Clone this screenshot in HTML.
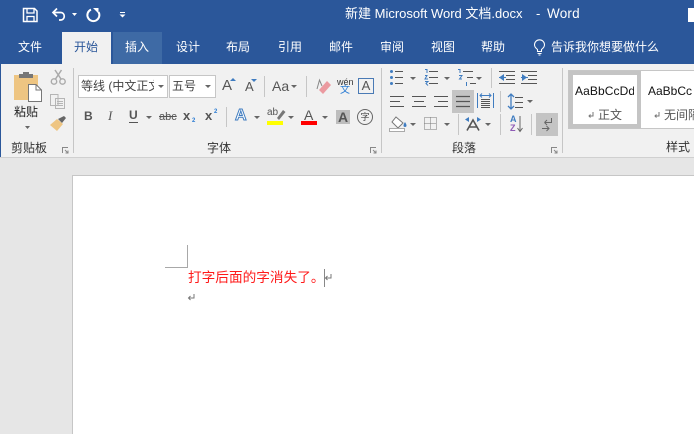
<!DOCTYPE html>
<html lang="zh">
<head>
<meta charset="utf-8">
<style>
html,body{margin:0;padding:0;width:694px;height:434px;overflow:hidden;background:#e6e6e6;}
body{position:relative;font-family:"Liberation Sans","Noto Sans CJK SC",sans-serif;}
div,span{position:absolute;white-space:nowrap;}
.t{font-size:12px;line-height:16px;color:#fff;text-align:center;width:48px;top:39px;}
.l{font-size:12px;line-height:16px;color:#333;}
svg{position:absolute;left:0;top:0;}
</style>
</head>
<body>
<div style="left:0;top:0;width:694px;height:64px;background:#2b579a"></div>
<div style="left:0;top:64px;width:694px;height:93px;background:#f1f1f1"></div>
<div style="left:0;top:64px;width:1px;height:93px;background:#2b579a"></div>
<div style="left:0;top:157px;width:694px;height:1px;background:#d0d0d0"></div>
<div style="left:62px;top:32px;width:49px;height:32px;background:#f1f1f1"></div>
<div style="left:113px;top:32px;width:49px;height:32px;background:#3e6aa5"></div>
<div style="left:688px;top:8px;width:6px;height:14px;background:#fff"></div>

<div style="left:345px;top:6px;font-size:13px;line-height:16px;color:#fff">新建 Microsoft Word 文档.docx</div>
<div style="left:536px;top:6px;font-size:13px;line-height:16px;color:#fff">-</div>
<div style="left:547px;top:6px;font-size:13.5px;line-height:16px;color:#fff;letter-spacing:.2px">Word</div>

<div class="t" style="left:6px">文件</div>
<div class="t" style="left:62px;color:#2b579a">开始</div>
<div class="t" style="left:113px">插入</div>
<div class="t" style="left:164px">设计</div>
<div class="t" style="left:214px">布局</div>
<div class="t" style="left:266px">引用</div>
<div class="t" style="left:317px">邮件</div>
<div class="t" style="left:368px">审阅</div>
<div class="t" style="left:419px">视图</div>
<div class="t" style="left:469px">帮助</div>
<div class="t" style="left:551px;width:auto">告诉我你想要做什么</div>

<!-- ribbon separators -->
<div style="left:73px;top:68px;width:1px;height:85px;background:#c6c6c6"></div>
<div style="left:381px;top:68px;width:1px;height:85px;background:#c6c6c6"></div>
<div style="left:562px;top:68px;width:1px;height:85px;background:#c6c6c6"></div>

<!-- group labels -->
<div class="l" style="left:14px;top:104px;color:#222">粘贴</div>
<div class="l" style="left:11px;top:140px">剪贴板</div>
<div class="l" style="left:207px;top:140px">字体</div>
<div class="l" style="left:452px;top:140px">段落</div>
<div class="l" style="left:666px;top:139px">样式</div>

<!-- font boxes -->
<div style="left:78px;top:75px;width:90px;height:23px;background:#fff;border:1px solid #c6c6c6;box-sizing:border-box"></div>
<div style="left:169px;top:75px;width:47px;height:23px;background:#fff;border:1px solid #c6c6c6;box-sizing:border-box"></div>
<div style="left:81px;top:78px;width:73px;height:16px;overflow:hidden;font-size:12px;line-height:16px;color:#444">等线 (中文正文)</div>
<div style="left:172px;top:78px;font-size:12px;line-height:16px;color:#444">五号</div>

<div style="left:84px;top:108px;font:bold 12px/16px 'Liberation Sans',sans-serif;color:#555">B</div>
<div style="left:108px;top:108px;font:italic 13px/16px 'Liberation Serif',serif;color:#555">I</div>
<div style="left:129px;top:107px;font:bold 12px/16px 'Liberation Sans',sans-serif;color:#555">U</div>
<div style="left:159px;top:109px;font:11px/16px 'Liberation Sans',sans-serif;color:#555;text-decoration:line-through">abc</div>
<div style="left:183px;top:108px;font:bold 13px/16px 'Liberation Sans',sans-serif;color:#555">x</div>
<div style="left:192px;top:117px;font:bold 6px/8px 'Liberation Sans',sans-serif;color:#2b7cd3">2</div>
<div style="left:205px;top:108px;font:bold 13px/16px 'Liberation Sans',sans-serif;color:#555">x</div>
<div style="left:214px;top:108px;font:bold 6px/8px 'Liberation Sans',sans-serif;color:#2b7cd3">2</div>

<div style="left:222px;top:77px;font:15px/18px 'Liberation Sans',sans-serif;color:#555">A</div>
<div style="left:245px;top:79px;font:13px/16px 'Liberation Sans',sans-serif;color:#555">A</div>
<div style="left:272px;top:77px;font:14px/18px 'Liberation Sans',sans-serif;color:#555">Aa</div>
<div style="left:337px;top:77px;font:9px/10px 'Liberation Sans',sans-serif;color:#333">wén</div>
<div style="left:340px;top:85px;font:10px/12px 'Liberation Sans','Noto Sans CJK SC',sans-serif;color:#2b7cd3">文</div>
<div style="left:358px;top:78px;width:16px;height:16px;box-sizing:border-box;border:1px solid #4a7ab5;font:13px/14px 'Liberation Sans',sans-serif;color:#555;text-align:center">A</div>
<div style="left:235px;top:107px;font:bold 16px/18px 'Liberation Sans',sans-serif;color:#fff;-webkit-text-stroke:1px #3f7cc0">A</div>
<div style="left:267px;top:107px;font:10px/12px 'Liberation Sans',sans-serif;color:#555">ab</div>
<div style="left:304px;top:107px;font:14px/16px 'Liberation Sans',sans-serif;color:#555">A</div>
<div style="left:336px;top:110px;width:14px;height:14px;background:#bdbdbd;font:bold 14px/14px 'Liberation Sans',sans-serif;color:#555;text-align:center">A</div>
<div style="left:357px;top:109px;width:16px;height:16px;box-sizing:border-box;border:1px solid #666;border-radius:50%;font-size:9px;line-height:14px;color:#444;text-align:center">字</div>
<span style="left:510px;top:114px;font:bold 9px/10px 'Liberation Sans',sans-serif;color:#3f7cc0">A</span>
<span style="left:510px;top:123px;font:bold 9px/10px 'Liberation Sans',sans-serif;color:#8e5bb5">Z</span>

<!-- paragraph highlights -->
<div style="left:452px;top:90px;width:22px;height:23px;background:#c4c4c4"></div>
<div style="left:536px;top:113px;width:22px;height:23px;background:#c4c4c4"></div>

<!-- styles gallery -->
<div style="left:568px;top:70px;width:126px;height:59px;background:#fff;border:1px solid #c6c6c6;border-right:0;box-sizing:border-box"></div>
<div style="left:569px;top:71px;width:72px;height:57px;background:#c4c4c4"></div>
<div style="left:573px;top:75px;width:64px;height:49px;background:#fff"></div>
<div style="left:575px;top:83px;width:59px;height:16px;overflow:hidden;font-size:12px;line-height:16px;color:#111;letter-spacing:.1px">AaBbCcDd</div>
<div style="left:648px;top:83px;font-size:12px;line-height:16px;color:#111">AaBbCc</div>
<div style="left:598px;top:107px;font-size:12px;line-height:16px;color:#555">正文</div>
<div style="left:664px;top:107px;font-size:12px;line-height:16px;color:#555">无间隔</div>

<!-- page -->
<div style="left:72px;top:175px;width:640px;height:280px;background:#fff;border:1px solid #c6c6c6;box-sizing:border-box"></div>
<div style="left:187px;top:245px;width:1px;height:23px;background:#a8a8a8"></div>
<div style="left:165px;top:267px;width:23px;height:1px;background:#a8a8a8"></div>
<div style="left:188px;top:269px;font-size:13.67px;line-height:18px;color:#ff1a1a">打字后面的字消失了。</div>
<div style="left:324px;top:269px;width:1px;height:18px;background:#888"></div>

<svg width="694" height="434" viewBox="0 0 694 434" fill="none">
<!-- save -->
<path d="M23.500 8.500H34.500L37 11V21.500H23.500Z" stroke="#fff" stroke-width="1.500"/>
<path d="M27 9V13H34V9M27 21V16.500H34V21" stroke="#fff" stroke-width="1.300"/>
<!-- undo -->
<path d="M57 8.500L53 12.500L57 16.500M53.500 12.500H60.500C65.500 12.500 65.500 20 60.500 20H59" stroke="#fff" stroke-width="1.700"/>
<path d="M72 13H77L74.500 16Z" fill="#fff"/>
<!-- redo -->
<path d="M91 9.600A6 6 0 1 0 98.500 12" stroke="#fff" stroke-width="2"/>
<path d="M93 8H98.500V13.500Z" fill="#fff"/>
<path d="M120 12.500H125" stroke="#fff"/>
<path d="M119.500 14.500H125.500L122.500 17.500Z" fill="#fff"/>
<!-- bulb -->
<path d="M537.500 49.500C535.500 48 534.500 46.500 534.500 44.800A5 5 0 0 1 544.500 44.800C544.500 46.500 543.500 48 541.500 49.500V51.500H537.500ZM537.500 53.500H541.500M538.500 55H540.500" stroke="#fff" stroke-width="1.050"/>

<!-- paste -->
<rect x="14" y="75" width="24" height="25" fill="#eec582"/>
<path d="M19 78V74H23V72H29V74H33V78Z" fill="#777"/>
<path d="M28.500 84.500H36L41.500 90V101.500H28.500Z" fill="#fff" stroke="#777"/>
<path d="M36 84.500V90H41.500" stroke="#777"/>
<path d="M25 126H30L27.500 129Z" fill="#666"/>
<!-- cut -->
<circle cx="54" cy="81.500" r="2.700" stroke="#aaa" stroke-width="1.400"/>
<circle cx="62.500" cy="81.500" r="2.700" stroke="#aaa" stroke-width="1.400"/>
<path d="M55.500 79L61.500 70M61 79L55 70" stroke="#aaa" stroke-width="1.500"/>
<!-- copy -->
<path d="M50.500 94.500H58V105.500H50.500ZM55.500 98.500H64.500V108.500H55.500Z" fill="#f1f1f1" stroke="#b5b5b5"/>
<path d="M57 101.500H63M57 103.500H63M57 105.500H63" stroke="#b5b5b5"/>
<!-- painter -->
<path d="M50 125L57 119L63 124L57 131Z" fill="#eec582"/>
<path d="M58 119L64 116L66 118L62 123Z" fill="#666"/>
<!-- dialog launchers -->
<g stroke="#888"><path d="M62.500 153V147.500H68M65 150L68 153M68 150.500V153H65.500"/><path d="M370.500 153V147.500H376M373 150L376 153M376 150.500V153H373.500"/><path d="M551.500 153V147.500H557M554 150L557 153M557 150.500V153H554.500"/></g>
<!-- dropdown arrows -->
<g fill="#666">
<path d="M158 85H164L161 88Z"/><path d="M205 85H211L208 88Z"/>
<path d="M146 116H152L149 119Z"/><path d="M254 116H260L257 119Z"/><path d="M288 116H294L291 119Z"/><path d="M322 116H328L325 119Z"/>
<path d="M291 85H297L294 88Z"/>
<path d="M410 77H416L413 80Z"/><path d="M444 77H450L447 80Z"/><path d="M476 77H482L479 80Z"/>
<path d="M527 100H533L530 103Z"/><path d="M410 123H416L413 126Z"/><path d="M444 123H450L447 126Z"/><path d="M485 123H491L488 126Z"/>
</g>
<path d="M129 122.500H138" stroke="#555"/>
<g stroke="#c6c6c6"><path d="M264.500 76V97M306.500 76V97M226.500 107V127M491.500 68V88M500.500 91V112M458.500 114V135M500.500 114V135M531.500 114V135"/></g>
<!-- A arrows -->
<path d="M230 81L233 78L236 81Z" fill="#3f7cc0"/><path d="M251 79H257L254 82Z" fill="#3f7cc0"/>
<!-- eraser -->
<path d="M319 90L327 81L331 85L323 94Z" fill="#eb9aa0"/>
<path d="M317 89L319.500 80L322 86" stroke="#888"/>
<!-- highlight, colour bars -->
<path d="M277 118L283 110L285.500 112L279 120Z" fill="#777"/>
<rect x="267" y="121" width="16" height="4" fill="#ffff00"/>
<rect x="301" y="121" width="16" height="4" fill="#ff0000"/>
<!-- lists -->
<g stroke="#555">
<path d="M395 71.500H403M395 77.500H403M395 83.500H403"/>
<path d="M429 71.500H438M429 77.500H438M429 83.500H438"/>
<path d="M463 71.500H473M467 77.500H473M470 83.500H476"/>
<path d="M390 96.500H404M390 101.500H400M390 106.500H404"/>
<path d="M412 96.500H426M414 101.500H424M412 106.500H426"/>
<path d="M434 96.500H448M438 101.500H448M434 106.500H448"/>
<path d="M456 96.500H470M456 101.500H470M456 106.500H470" stroke-width="1.200"/>
<path d="M481 99.500H490M481 101.500H490M481 103.500H490M481 105.500H490M481 107.500H490"/>
<path d="M515 97.500H523M515 102.500H523M515 107.500H523"/>
<path d="M499 71.500H515M506 75.500H515M506 79.500H515M499 83.500H515"/>
<path d="M521 71.500H537M528 75.500H537M528 79.500H537M521 83.500H537"/>
</g>
<g fill="#3f7cc0">
<circle cx="391.500" cy="71.500" r="1.500"/><circle cx="391.500" cy="77.500" r="1.500"/><circle cx="391.500" cy="83.500" r="1.500"/>
<path d="M499 77.500L504 74V81Z"/><path d="M527 77.500L522 74V81Z"/>
</g>
<g stroke="#3f7cc0">
<path d="M425 69.500H427V73M425 75.500H427L425 79H428M425 81.500H428L426 83.500L428 85.500"/>
<path d="M458 69.500H460V73M459 75.500H462L459.500 79H462M466.500 82V86"/>
<path d="M477.500 93V108M493.500 93V108"/>
<path d="M480 95.500H491M482 93.500L480 95.500L482 97.500M489 93.500L491 95.500L489 97.500"/>
<path d="M511 95V108M508 97L511 94L514 97M508 106L511 109L514 106" stroke-width="1.300"/>
<path d="M499 77.500H506M521 77.500H528"/>
</g>
<!-- shading -->
<path d="M396 117L403 123L398 128L392 122Z" fill="#fff" stroke="#777"/>
<path d="M405 122C403 125 403 127 405 127C407 127 407 125 405 122Z" fill="#3f7cc0"/>
<rect x="389.500" y="128.500" width="15" height="3" fill="#fff" stroke="#aaa"/>
<!-- borders -->
<path d="M424.500 117.500H436.500V129.500H424.500ZM430.500 117.500V129.500M424.500 123.500H436.500" stroke="#777" stroke-dasharray="1 1"/>
<!-- A with arrows -->
<path d="M467 130.500L473 120L479 130.500M469 127H477" stroke="#555" stroke-width="1.600"/>
<path d="M469 117L465 119.500L469 122ZM477 117L481 119.500L477 122Z" fill="#3f7cc0"/>
<!-- sort -->
<path d="M520 116V131M517.500 128L520 131.500L522.500 128" stroke="#666"/>
<!-- pilcrow button -->
<path d="M544.500 122.500H551.500V118M544.500 122.500L547 120M544.500 122.500L547 125" stroke="#666"/>
<path d="M542 128.500H549M546.500 126L549 128.500L546.500 131" stroke="#666"/>
<!-- pilcrows -->
<g stroke="#777"><path d="M331 274V278H325.500M327.500 276L325.500 278L327.500 280"/><path d="M194 294V298H188.500M190.500 296L188.500 298L190.500 300"/><path d="M593 112V116H589M590.500 114.500L589 116L590.500 117.500"/><path d="M659 112V116H655M656.500 114.500L655 116L656.500 117.500"/></g>
</svg>
</body>
</html>
